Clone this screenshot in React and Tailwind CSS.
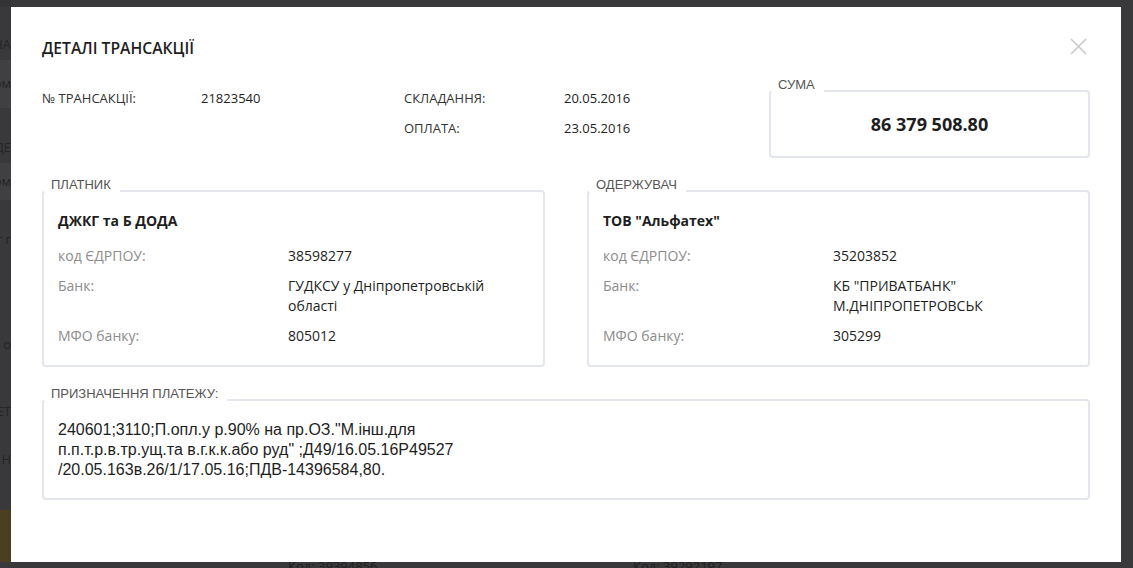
import React from 'react';

const sans = "font-['Open_Sans',sans-serif]";
const arial = "font-['Liberation_Sans',Arial,sans-serif]";

const payer = {
    legend: 'ПЛАТНИК',
    name: 'ДЖКГ та Б ДОДА',
    code: '38598277',
    bank: 'ГУДКСУ у Дніпропетровській області',
    mfo: '805012',
};

const receiver = {
    legend: 'ОДЕРЖУВАЧ',
    name: 'ТОВ "Альфатех"',
    code: '35203852',
    bank: 'КБ "ПРИВАТБАНК" М.ДНІПРОПЕТРОВСЬК',
    mfo: '305299',
};

function Fieldset({ legend, className = '', children }) {
    return (
        <div className={`relative rounded-[4px] border-2 border-[#e3e6ed] ${className}`}>
            <span className={`absolute -top-[15px] left-0 bg-white pl-[7px] pr-[9px] ${arial} text-[13px] leading-[15px] text-[#555]`}>
                {legend}
            </span>
            {children}
        </div>
    );
}

function PartyCard({ party }) {
    const rows = [
        ['код ЄДРПОУ:', party.code],
        ['Банк:', party.bank],
        ['МФО банку:', party.mfo],
    ];
    return (
        <Fieldset legend={party.legend} className="h-[177px] px-[14px] py-[19px]">
            <div className="text-[14px] font-bold leading-5 text-[#1e1e1e]">{party.name}</div>
            <div className="mt-[15px] flex flex-col gap-[10px]">
                {rows.map(([label, value]) => (
                    <div key={label} className="grid grid-cols-[230px_1fr] text-[14px] leading-5">
                        <span className="text-[#8c8c8c]">{label}</span>
                        <span className="text-[#1e1e1e]">{value}</span>
                    </div>
                ))}
            </div>
        </Fieldset>
    );
}

// faded page content behind the overlay
function Backdrop() {
    const bits = [
        { h: 'h-[23px]', t: '' },
        { h: 'h-[30px]', t: 'НА' },
        { h: 'h-[48px]', t: 'ом', bg: 'bg-[#404042]' },
        { h: 'h-[25px]', t: '' },
        { h: 'h-[30px]', t: 'ДЕ' },
        { h: 'h-[37px]', t: 'ом', bg: 'bg-[#404042]' },
        { h: 'h-[25px]', t: '' },
        { h: 'h-[30px]', t: 'т г' },
        { h: 'h-[75px]', t: '' },
        { h: 'h-[30px]', t: 'о' },
        { h: 'h-[37px]', t: '' },
        { h: 'h-[30px]', t: 'ЕТ' },
        { h: 'h-[18px]', t: '' },
        { h: 'h-[30px]', t: ',Н' },
        { h: 'h-[35px]', t: '' },
        { h: 'h-[52px]', t: '', bg: 'bg-[#4a3f22]' },
    ];
    return (
        <div className="flex h-full w-full bg-[#39393b]">
            <div className="flex w-[11px] flex-col overflow-hidden">
                <div className="h-[7px] shrink-0 bg-[#333335]" />
                {bits.map((b, i) => (
                    <div key={i} className={`flex shrink-0 ${b.h} ${b.bg || ''} items-center justify-end whitespace-nowrap ${sans} text-[13px] text-[#242424]`}>
                        {b.t}
                    </div>
                ))}
            </div>
            <div className="relative flex-1">
                <div className={`absolute left-[277px] top-[557px] ${sans} text-[13px] text-[#1e1e1e]`}>Код: 39394856</div>
                <div className={`absolute left-[622px] top-[557px] ${sans} text-[13px] text-[#1e1e1e]`}>Код: 39292197</div>
            </div>
        </div>
    );
}

export default function App() {
    return (
        <div className={`relative h-[568px] w-[1133px] overflow-hidden ${sans}`}>
            <Backdrop />

            <div className="absolute left-[11px] top-[7px] h-[555px] w-[1110px] bg-white px-[31px] pt-[29px]">
                <svg
                    className="absolute right-[34px] top-[31px]"
                    width="17"
                    height="17"
                    viewBox="0 0 17 17"
                    fill="none"
                    stroke="#c9c9c9"
                    strokeWidth="1.6"
                >
                    <path d="M1 1L16 16M16 1L1 16" />
                </svg>

                {/* Header */}
                <h2 className="text-[15.7px] font-semibold leading-6 text-[#1e1e1e]">ДЕТАЛІ ТРАНСАКЦІЇ</h2>

                {/* Summary */}
                <div className="mt-[28px] flex items-start">
                    <div className="grid w-[727px] grid-cols-[159px_203px_160px_1fr] gap-y-[10px] text-[13px] leading-5">
                        <span className="text-[#333]">№ ТРАНСАКЦІЇ:</span>
                        <span className="text-[#222]">21823540</span>
                        <span className="text-[#333]">СКЛАДАННЯ:</span>
                        <span className="text-[#222]">20.05.2016</span>
                        <span />
                        <span />
                        <span className="text-[#333]">ОПЛАТА:</span>
                        <span className="text-[#222]">23.05.2016</span>
                    </div>
                    <Fieldset legend="СУМА" className="mt-[2px] flex h-[68px] w-[321px] items-center justify-center">
                        <span className="text-[18px] font-bold leading-6 text-[#1e1e1e]">86 379 508.80</span>
                    </Fieldset>
                </div>

                {/* Parties */}
                <div className="mt-[32px] grid grid-cols-2 gap-[42px]">
                    <PartyCard party={payer} />
                    <PartyCard party={receiver} />
                </div>

                {/* Purpose */}
                <Fieldset legend="ПРИЗНАЧЕННЯ ПЛАТЕЖУ:" className="mt-[32px] h-[101px] px-[14px] pt-[19px]">
                    <p className={`${arial} text-[16px] leading-5 text-[#1e1e1e]`}>
                        240601;3110;П.опл.у р.90% на пр.ОЗ."М.інш.для
                        <br />
                        п.п.т.р.в.тр.ущ.та в.г.к.к.або руд" ;Д49/16.05.16Р49527
                        <br />
                        /20.05.163в.26/1/17.05.16;ПДВ-14396584,80.
                    </p>
                </Fieldset>
            </div>
        </div>
    );
}
